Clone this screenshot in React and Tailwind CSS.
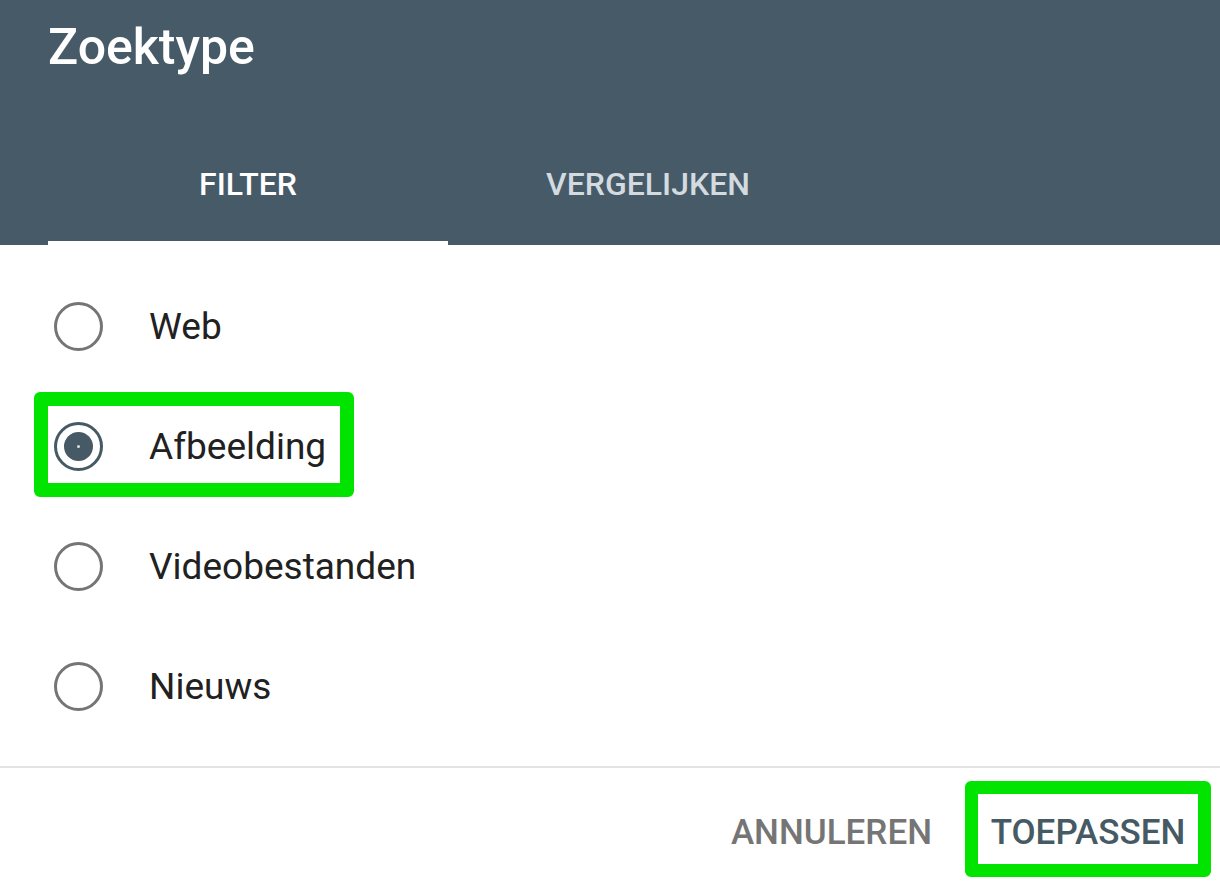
import { useState } from 'react';

const OPTIONS = ['Web', 'Afbeelding', 'Videobestanden', 'Nieuws'];

function Radio({ checked }) {
  return (
    <span
      className={`flex items-center justify-center w-[49px] h-[49px] rounded-full border-[3.5px] shrink-0 ${
        checked ? 'border-[#455a64]' : 'border-[#757575]'
      }`}
    >
      {checked && (
        <span className="flex items-center justify-center w-[29px] h-[29px] rounded-full bg-[#455a64]">
          <span className="w-[3px] h-[3px] rounded-full bg-white/80"></span>
        </span>
      )}
    </span>
  );
}

export default function App() {
  const [selected, setSelected] = useState('Afbeelding');

  return (
    <div
      className="w-[1220px] h-[884px] bg-white flex flex-col overflow-hidden"
      style={{ fontFamily: 'Roboto, "Liberation Sans", sans-serif' }}
    >
      <header className="h-[245px] bg-[#475a67] flex flex-col justify-between pl-[48px]">
        <h1 className="text-white text-[50px] leading-none font-medium pt-[22px]">Zoektype</h1>
        <div className="flex">
          <button className="w-[400px] h-[110px] flex flex-col items-center justify-end">
            <span className="text-white text-[32px] font-medium leading-none mb-[41px]">FILTER</span>
            <span className="w-full h-[4px] bg-white"></span>
          </button>
          <button className="w-[400px] h-[110px] flex flex-col items-center justify-end">
            <span className="text-[#d3dbe0] text-[32px] font-medium leading-none mb-[45px]">VERGELIJKEN</span>
          </button>
        </div>
      </header>

      <div className="pt-[21px] flex flex-col">
        {OPTIONS.map((opt) => (
          <div
            key={opt}
            onClick={() => setSelected(opt)}
            className="relative h-[120px] flex items-center pl-[54px] gap-[46px] cursor-pointer"
          >
            <Radio checked={selected === opt} />
            <span className="text-[#212121] text-[37px] leading-none">{opt}</span>
            {opt === 'Afbeelding' && (
              <span className="absolute left-[34px] top-[6px] w-[320px] h-[105px] border-[14px] border-[#00e400] rounded-[6px] pointer-events-none"></span>
            )}
          </div>
        ))}
      </div>

      <div className="mt-[20px] h-[2px] bg-[#e3e3e3]"></div>

      <footer className="flex justify-end items-center pr-[9px] pt-[13px]">
        <button className="text-[#757575] text-[35px] font-medium leading-none mr-[33px] pt-[6px]">ANNULEREN</button>
        <div className="relative w-[246px] h-[96px] flex items-center justify-center pt-[6px]">
          <span className="text-[#455a64] text-[35px] font-medium leading-none">TOEPASSEN</span>
          <span className="absolute inset-0 border-[13px] border-[#00e400] rounded-[6px] pointer-events-none"></span>
        </div>
      </footer>
    </div>
  );
}
